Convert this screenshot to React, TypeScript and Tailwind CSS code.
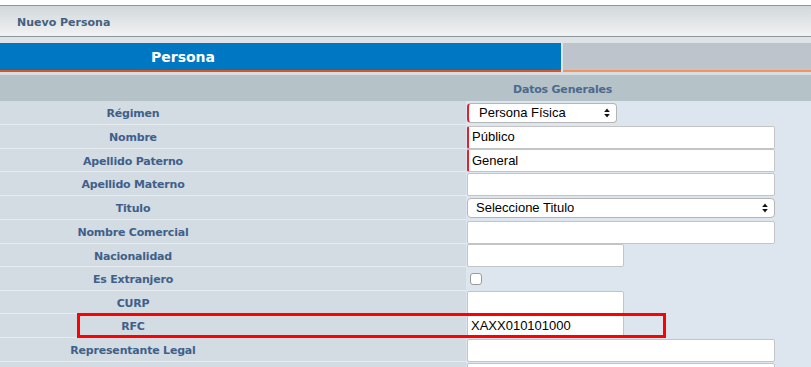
const labelFont = "font-['DejaVu_Sans','Verdana',sans-serif]"

interface RowInterface {
  label: string,
  h: string,
  field?: React.ReactNode,
  highlight?: boolean
}

const TextInput = ({ value = "", width = "w-[308px]", required = false }: { value?: string, width?: string, required?: boolean }) => (
  <div
    className={`h-[23px] ${width} bg-white border border-[#c4c4c4] rounded-[2px] flex items-center pl-[3px] text-[13px] text-black font-['Liberation_Sans',Arial,sans-serif] ${required ? "border-l-2 border-l-[#e3202b]" : ""}`}
  >
    {value}
  </div>
)

const Arrows = () => (
  <svg width="6" height="10" viewBox="0 0 6 10" className="shrink-0">
    <path d="M3 0.5 L5.8 4 H0.2 Z" fill="#111" />
    <path d="M3 9.5 L5.8 6 H0.2 Z" fill="#111" />
  </svg>
)

const SelectBox = ({ value, width, required = false, pad = "pl-[10px]" }: { value: string, width: string, required?: boolean, pad?: string }) => (
  <div
    className={`h-[20px] ${width} bg-white border border-[#b5b5b5] rounded-[4px] flex items-center justify-between ${pad} pr-[6px] text-[13px] text-black font-['Liberation_Sans',Arial,sans-serif] ${required ? "border-l-2 border-l-[#e3202b]" : ""}`}
  >
    <span>{value}</span>
    <Arrows />
  </div>
)

const Checkbox = () => (
  <div className="ml-[3px] w-[12px] h-[12px] bg-white border border-[#9a9a9a] rounded-[3px]" />
)

const Row = ({ label, h, field, highlight = false }: RowInterface) => (
  <div className={`relative flex ${h}`}>
    <div className="w-[466px] shrink-0 bg-[#d3dce3] border-b border-[#e6ecf0]">
      <div className={`w-[266px] h-full flex items-center justify-center pt-[4px] text-[11px] font-bold tracking-[-0.2px] text-[#40608a] ${labelFont}`}>
        {label}
      </div>
    </div>
    <div className="flex-1 flex items-center pl-[1px]">
      {field}
    </div>
    {highlight && (
      <div className="absolute left-[77px] top-[-1px] w-[589px] h-[25px] border-[3px] border-[#ff0000]" />
    )}
  </div>
)

export default function App() {
  return (
    <div className="w-[811px] h-[367px] overflow-hidden bg-white">
      <div className="h-[5px] bg-white" />
      <div className={`h-[32px] border-y border-[#8e969c] bg-gradient-to-b from-[#d2d8db] to-[#f1f2f3] flex items-center pl-[17px] pt-[4px] text-[11px] font-bold text-[#44607f] ${labelFont}`}>
        Nuevo Persona
      </div>
      <div className="h-[6px] bg-[#dde3e7]" />
      <div className="h-[29px] flex gap-[2px] bg-[#dde3e7]">
        <div className={`w-[561px] bg-[#0077c3] border-b-2 border-[#de5220] flex items-center pl-[151px] pt-[2px] text-[14px] font-bold text-white ${labelFont}`}>
          Persona
        </div>
        <div className="flex-1 bg-[#bdc4cb] border-b-2 border-[#f7925a]" />
      </div>
      <div className="h-[3px] bg-[#d6dee3]" />
      <div className={`h-[26px] bg-[#b5c2c7] flex items-center pl-[513px] pt-[4px] text-[11px] font-bold tracking-[-0.2px] text-[#4a6a8e] ${labelFont}`}>
        Datos Generales
      </div>
      <div className="bg-[#dde6ee]">
        <Row label="Régimen" h="h-[24px]" field={<SelectBox value="Persona Física" width="w-[150px]" required />} />
        <Row label="Nombre" h="h-[24px]" field={<TextInput value="Público" required />} />
        <Row label="Apellido Paterno" h="h-[23px]" field={<TextInput value="General" required />} />
        <Row label="Apellido Materno" h="h-[24px]" field={<TextInput />} />
        <Row label="Titulo" h="h-[24px]" field={<SelectBox value="Seleccione Titulo" width="w-[308px]" pad="pl-[8px]" />} />
        <Row label="Nombre Comercial" h="h-[24px]" field={<TextInput />} />
        <Row label="Nacionalidad" h="h-[23px]" field={<TextInput width="w-[157px]" />} />
        <Row label="Es Extranjero" h="h-[24px]" field={<Checkbox />} />
        <Row label="CURP" h="h-[23px]" field={<TextInput width="w-[157px]" />} />
        <Row label="RFC" h="h-[24px]" field={<TextInput value="XAXX010101000" width="w-[157px]" />} highlight />
        <Row label="Representante Legal" h="h-[24px]" field={<TextInput />} />
        <Row label="" h="h-[24px]" field={<TextInput />} />
      </div>
    </div>
  )
}
